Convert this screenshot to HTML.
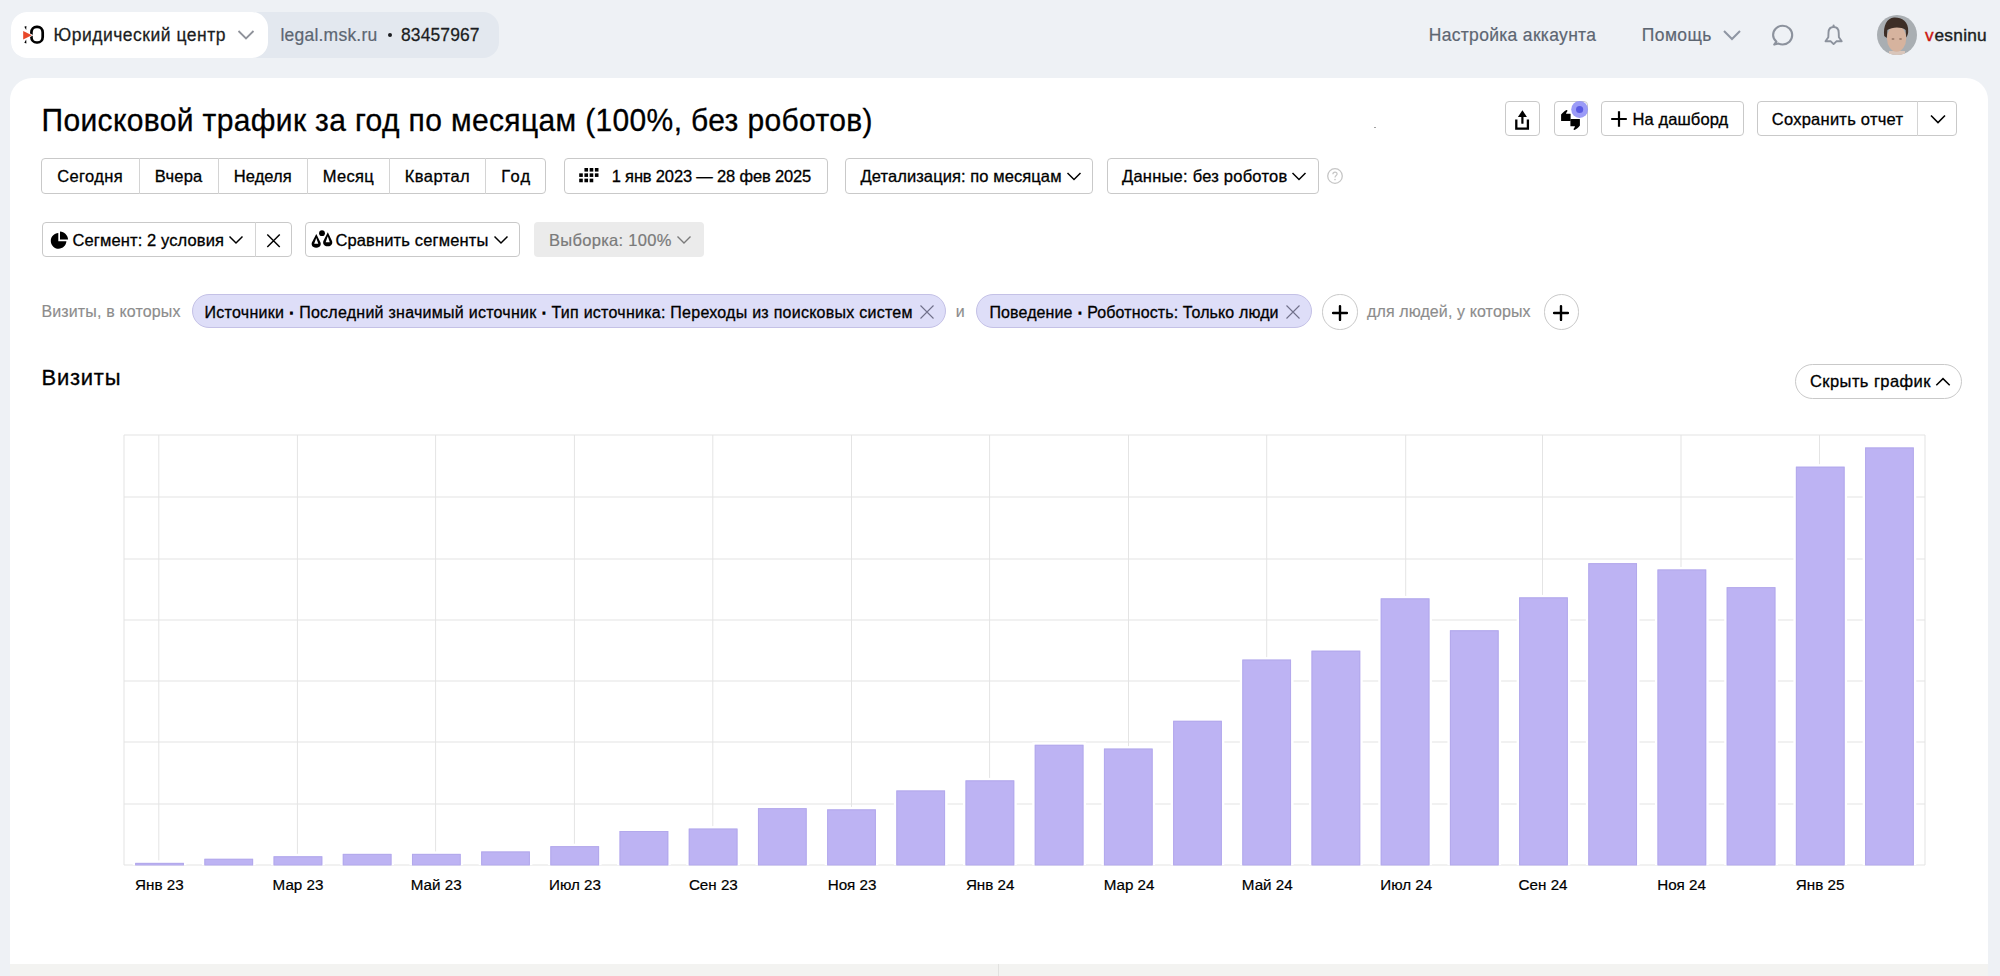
<!DOCTYPE html>
<html><head><meta charset="utf-8"><title>Поисковой трафик</title>
<style>
html,body{margin:0;padding:0;}
body{width:2000px;height:976px;overflow:hidden;background:#eef1f5;position:relative;font-family:"Liberation Sans",sans-serif;}
.t{position:absolute;white-space:nowrap;}
.b{position:absolute;}
.dot{-webkit-text-stroke:1.3px #000;}
</style></head><body>
<div class="b" style="left:11px;top:12px;width:488px;height:46px;background:#e3e8ef;border-radius:16px;"></div>
<div class="b" style="left:11px;top:12px;width:257px;height:46px;background:#fff;border-radius:16px;"></div>
<svg class="b" style="left:18px;top:20px" width="32" height="28" viewBox="0 0 32 28">
<rect x="13.4" y="6.8" width="11.3" height="15.7" rx="5.2" ry="5.6" fill="none" stroke="#000" stroke-width="2.7"/>
<path d="M5.2 10.9 L13.8 15.2 L5.2 19.5 Z" fill="#e8482a" stroke="#fff" stroke-width="1.6" paint-order="stroke"/>
<path d="M6.3 6.8 L8.4 5.9 L8.2 10 Z M6.3 22.7 L8.4 23.6 L8.2 19.6 Z" fill="#000"/>
</svg>
<div class="t" style="left:53.50px;top:26.59px;font-size:17.5px;line-height:17.5px;color:#1b1d21;letter-spacing:0.512px;-webkit-text-stroke:0.25px #1b1d21;transform:scaleY(1.07);transform-origin:0 14.81px;">Юридический центр</div>
<svg class="b" style="left:237px;top:29.3px" width="18" height="12" viewBox="0 0 18 12"><path d="M1.5 2 L9 9.5 L16.5 2" fill="none" stroke="#8f929a" stroke-width="1.8"/></svg>
<div class="t" style="left:280.50px;top:26.59px;font-size:17.5px;line-height:17.5px;color:#5d6672;letter-spacing:0.214px;-webkit-text-stroke:0.2px #5d6672;transform:scaleY(1.07);transform-origin:0 14.81px;">legal.msk.ru</div>
<div class="b" style="left:387.5px;top:32.5px;width:4px;height:4px;background:#1b1d21;border-radius:50%;"></div>
<div class="t" style="left:401.00px;top:26.59px;font-size:17.5px;line-height:17.5px;color:#1b1d21;letter-spacing:0.093px;-webkit-text-stroke:0.25px #1b1d21;transform:scaleY(1.05);transform-origin:0 14.81px;">83457967</div>
<div class="t" style="left:1428.70px;top:26.69px;font-size:17.5px;line-height:17.5px;color:#5d6672;letter-spacing:0.315px;-webkit-text-stroke:0.2px #5d6672;transform:scaleY(1.07);transform-origin:0 14.81px;">Настройка аккаунта</div>
<div class="t" style="left:1641.70px;top:26.69px;font-size:17.5px;line-height:17.5px;color:#5d6672;letter-spacing:0.440px;-webkit-text-stroke:0.2px #5d6672;transform:scaleY(1.07);transform-origin:0 14.81px;">Помощь</div>
<svg class="b" style="left:1722px;top:28px" width="20" height="14" viewBox="0 0 20 14"><path d="M2 3 L10 11 L18 3" fill="none" stroke="#8f96a3" stroke-width="2"/></svg>
<svg class="b" style="left:1770px;top:22.8px" width="26" height="26" viewBox="0 0 26 26"><path d="M6.4 18.6 C 4.3 17 3.1 14.7 3.1 12.1 C 3.1 6.8 7.3 2.7 12.7 2.7 C 18 2.7 22.2 6.8 22.2 12.1 C 22.2 17.4 18 21.5 12.7 21.5 C 11.2 21.5 9.8 21.2 8.6 20.6 L 4.2 21.6 Z" fill="none" stroke="#8c929d" stroke-width="2.1" stroke-linejoin="round"/></svg>
<svg class="b" style="left:1821px;top:22px" width="24" height="26" viewBox="0 0 24 26"><path d="M12.6 5 C 9.3 5 7.6 7.6 7.5 10.5 L 7.3 15.3 L 4.5 19.3 L 9.8 19.3 L 12.6 22.1 L 15.4 19.3 L 20.7 19.3 L 17.9 15.3 L 17.7 10.5 C 17.6 7.6 15.9 5 12.6 5 Z" fill="none" stroke="#8c929d" stroke-width="1.9" stroke-linejoin="round"/><path d="M12.6 3.6 L12.6 5" stroke="#8c929d" stroke-width="2" stroke-linecap="round"/></svg>
<svg class="b" style="left:1877px;top:14.7px" width="40" height="40" viewBox="0 0 40 40">
<defs><clipPath id="av"><circle cx="20" cy="20" r="20"/></clipPath></defs>
<g clip-path="url(#av)"><rect width="40" height="40" fill="#a9aeb2"/>
<path d="M12 36 L12 44 L28 44 L28 36 Z" fill="#d9c6bb"/>
<ellipse cx="19.6" cy="23.5" rx="9.6" ry="13.2" fill="#d6b39e"/>
<path d="M7.2 21 C 6 11, 10 3, 17 2.6 C 24 2.2, 32 6, 31.2 17 C 31 19.5, 30 21.5, 29.2 22.5 L 28.6 15 C 24 11.5, 15 12, 10.4 15 L 9.8 23 Z" fill="#3d2e26"/>
<ellipse cx="16" cy="24" rx="1.5" ry="0.8" fill="#8a6a5a"/><ellipse cx="23.5" cy="24" rx="1.5" ry="0.8" fill="#8a6a5a"/>
</g></svg>
<div class="t" style="left:1925.00px;top:26.56px;font-size:17.3px;line-height:17.3px;color:#cc1510;-webkit-text-stroke:0.4px #cc1510;">v</div>
<div class="t" style="left:1934.50px;top:26.56px;font-size:17.3px;line-height:17.3px;color:#1b1d21;letter-spacing:0.260px;-webkit-text-stroke:0.4px #1b1d21;">esninu</div>
<div class="b" style="left:10px;top:78px;width:1978px;height:900px;background:#fff;border-radius:22px 22px 0 0;"></div>
<div class="b" style="left:10px;top:964px;width:1978px;height:12px;background:#f3f3f1;"></div>
<div class="b" style="left:998px;top:964px;width:1px;height:12px;background:#e2e2e0;"></div>
<div class="t" style="left:41.50px;top:105.80px;font-size:30px;line-height:30px;color:#000;letter-spacing:0.358px;-webkit-text-stroke:0.3px #000;transform:scaleY(1.06);transform-origin:0 25.39px;">Поисковой трафик за год по месяцам (100%, без роботов)</div>
<div class="b" style="left:1374.3px;top:126.8px;width:2px;height:1.2px;background:#8a8a8a;opacity:0.8;"></div>
<div class="b" style="left:1505px;top:101px;width:35px;height:35px;border:1px solid #c9c9c9;border-radius:4px;background:#fff;box-sizing:border-box;"></div>
<svg class="b" style="left:1505px;top:100px" width="35" height="35" viewBox="0 0 35 35"><path d="M17.4 10.2 L12.9 16.9 L21.9 16.9 Z" fill="#000"/><rect x="16.3" y="16" width="2.2" height="7.8" rx="0.6" fill="#000"/><path d="M11.3 19.4 L11.3 28.6 L22.9 28.6 L22.9 19.4" fill="none" stroke="#000" stroke-width="2.3"/></svg>
<div class="b" style="left:1553.5px;top:101px;width:34.5px;height:35px;border:1px solid #c9c9c9;border-radius:4px;background:#fff;box-sizing:border-box;"></div>
<svg class="b" style="left:1555px;top:100px" width="35" height="35" viewBox="0 0 35 35"><path d="M6.3 21.1 Q6.1 21.1 6.1 20.8 L6.1 14.6 C 7.6 12.6 9.6 11 11.6 10 Q12 9.8 12.2 10.2 L12.5 11 C 11.8 11.8 11.2 12.8 11 13.8 L15.3 13.8 Q15.6 13.8 15.6 14.1 L15.6 20.8 Q15.6 21.1 15.3 21.1 Z" fill="#000"/><path d="M24.6 19 Q24.9 19 24.9 19.3 L24.9 25.5 C 23.4 27.5 21.4 29.1 19.4 30 Q19 30.2 18.8 29.8 L18.5 29 C 19.2 28.2 19.8 27.2 20 26.2 L15.7 26.2 Q15.4 26.2 15.4 25.9 L15.4 19.3 Q15.4 19 15.7 19 Z" fill="#000"/></svg>
<svg class="b" style="left:1570px;top:100px" width="20" height="20" viewBox="0 0 20 20"><circle cx="9.6" cy="9.5" r="8.4" fill="#9090f6" fill-opacity="0.9"/><circle cx="9.6" cy="9.5" r="3.6" fill="#5a5ae3"/></svg>
<div class="b" style="left:1601px;top:101px;width:143px;height:35px;border:1px solid #c9c9c9;border-radius:4px;background:#fff;box-sizing:border-box;"></div>
<svg class="b" style="left:1609px;top:109px" width="20" height="20" viewBox="0 0 20 20"><path d="M10 2.2 L10 17.8 M2.2 10 L17.8 10" stroke="#000" stroke-width="2.2"/></svg>
<div class="t" style="left:1632.50px;top:110.53px;font-size:16.5px;line-height:16.5px;color:#000;letter-spacing:0.106px;-webkit-text-stroke:0.3px #000;">На дашборд</div>
<div class="b" style="left:1757px;top:101px;width:200px;height:35px;border:1px solid #c9c9c9;border-radius:4px;background:#fff;box-sizing:border-box;"></div>
<div class="b" style="left:1917px;top:101px;width:1px;height:35px;background:#d4d4d4;"></div>
<div class="t" style="left:1771.80px;top:110.53px;font-size:16.5px;line-height:16.5px;color:#000;letter-spacing:0.246px;-webkit-text-stroke:0.3px #000;">Сохранить отчет</div>
<svg class="b" style="left:1929px;top:113px" width="18" height="12" viewBox="0 0 18 12"><path d="M2 2.5 L9 9.5 L16 2.5" fill="none" stroke="#000" stroke-width="1.6"/></svg>
<div class="b" style="left:41px;top:158px;width:505px;height:36px;border:1px solid #c9c9c9;border-radius:4px;background:#fff;box-sizing:border-box;"></div>
<div class="b" style="left:139px;top:158px;width:1px;height:36px;background:#d4d4d4;"></div>
<div class="b" style="left:217.5px;top:158px;width:1px;height:36px;background:#d4d4d4;"></div>
<div class="b" style="left:307px;top:158px;width:1px;height:36px;background:#d4d4d4;"></div>
<div class="b" style="left:389px;top:158px;width:1px;height:36px;background:#d4d4d4;"></div>
<div class="b" style="left:485px;top:158px;width:1px;height:36px;background:#d4d4d4;"></div>
<div class="t" style="left:57.20px;top:167.53px;font-size:16.5px;line-height:16.5px;color:#000;letter-spacing:0.375px;-webkit-text-stroke:0.3px #000;">Сегодня</div>
<div class="t" style="left:154.70px;top:167.53px;font-size:16.5px;line-height:16.5px;color:#000;letter-spacing:0.250px;-webkit-text-stroke:0.3px #000;">Вчера</div>
<div class="t" style="left:233.80px;top:167.53px;font-size:16.5px;line-height:16.5px;color:#000;letter-spacing:0.070px;-webkit-text-stroke:0.3px #000;">Неделя</div>
<div class="t" style="left:322.70px;top:167.53px;font-size:16.5px;line-height:16.5px;color:#000;letter-spacing:0.312px;-webkit-text-stroke:0.3px #000;">Месяц</div>
<div class="t" style="left:404.80px;top:167.53px;font-size:16.5px;line-height:16.5px;color:#000;letter-spacing:0.425px;-webkit-text-stroke:0.3px #000;">Квартал</div>
<div class="t" style="left:501.20px;top:167.53px;font-size:16.5px;line-height:16.5px;color:#000;letter-spacing:1.375px;-webkit-text-stroke:0.3px #000;">Год</div>
<div class="b" style="left:563.5px;top:158px;width:264px;height:36px;border:1px solid #c9c9c9;border-radius:4px;background:#fff;box-sizing:border-box;"></div>
<svg class="b" style="left:579px;top:168px" width="20" height="16" viewBox="0 0 20 16"><rect x="5.43" y="0.00" width="3.6" height="3.6" fill="#000"/><rect x="10.66" y="0.00" width="3.6" height="3.6" fill="#000"/><rect x="15.89" y="0.00" width="3.6" height="3.6" fill="#000"/><rect x="0.20" y="5.33" width="3.6" height="3.6" fill="#000"/><rect x="5.43" y="5.33" width="3.6" height="3.6" fill="#000"/><rect x="10.66" y="5.33" width="3.6" height="3.6" fill="#000"/><rect x="15.89" y="5.33" width="3.6" height="3.6" fill="#000"/><rect x="0.20" y="10.66" width="3.6" height="3.6" fill="#000"/><rect x="5.43" y="10.66" width="3.6" height="3.6" fill="#000"/><rect x="10.66" y="10.66" width="3.6" height="3.6" fill="#000"/></svg>
<div class="t" style="left:611.70px;top:167.53px;font-size:16.5px;line-height:16.5px;color:#000;letter-spacing:-0.165px;-webkit-text-stroke:0.3px #000;">1 янв 2023 — 28 фев 2025</div>
<div class="b" style="left:845px;top:158px;width:248px;height:36px;border:1px solid #c9c9c9;border-radius:4px;background:#fff;box-sizing:border-box;"></div>
<div class="t" style="left:860.50px;top:167.53px;font-size:16.5px;line-height:16.5px;color:#000;letter-spacing:0.086px;-webkit-text-stroke:0.3px #000;">Детализация: по месяцам</div>
<svg class="b" style="left:1065px;top:169px" width="18" height="14" viewBox="0 0 18 14"><path d="M2.5 4 L9 10.5 L15.5 4" fill="none" stroke="#000" stroke-width="1.5"/></svg>
<div class="b" style="left:1106.5px;top:158px;width:212px;height:36px;border:1px solid #c9c9c9;border-radius:4px;background:#fff;box-sizing:border-box;"></div>
<div class="t" style="left:1122.00px;top:167.53px;font-size:16.5px;line-height:16.5px;color:#000;letter-spacing:0.236px;-webkit-text-stroke:0.3px #000;">Данные: без роботов</div>
<svg class="b" style="left:1290px;top:169px" width="18" height="14" viewBox="0 0 18 14"><path d="M2.5 4 L9 10.5 L15.5 4" fill="none" stroke="#000" stroke-width="1.5"/></svg>
<svg class="b" style="left:1326px;top:167px" width="18" height="18" viewBox="0 0 18 18"><circle cx="9" cy="9" r="7.3" fill="none" stroke="#c6c6c6" stroke-width="1.3"/><path d="M6.9 7.2 C 6.9 5.9 7.8 5.1 9 5.1 C 10.2 5.1 11.1 5.9 11.1 7 C 11.1 8.4 9 8.6 9 10.4" fill="none" stroke="#c6c6c6" stroke-width="1.2"/><circle cx="9" cy="12.6" r="0.8" fill="#c6c6c6"/></svg>
<div class="b" style="left:41.5px;top:222px;width:250px;height:35px;border:1px solid #c9c9c9;border-radius:4px;background:#fff;box-sizing:border-box;"></div>
<div class="b" style="left:255px;top:222px;width:1px;height:35px;background:#d4d4d4;"></div>
<svg class="b" style="left:49px;top:230px" width="20" height="20" viewBox="0 0 20 20"><path d="M9.3 3.1 C 5.2 3.4 1.8 6.7 1.8 10.9 C 1.8 15.2 5.3 18.7 9.6 18.7 C 13.8 18.7 17.1 15.4 17.4 11.3 L 9.3 11.3 Z" fill="#000"/><path d="M11 1.5 L11 9.6 L19.1 9.6 C 18.8 5.3 15.3 1.8 11 1.5 Z" fill="#000"/></svg>
<div class="t" style="left:72.50px;top:231.53px;font-size:16.5px;line-height:16.5px;color:#000;letter-spacing:0.121px;-webkit-text-stroke:0.3px #000;">Сегмент: 2 условия</div>
<svg class="b" style="left:227px;top:232.7px" width="18" height="14" viewBox="0 0 18 14"><path d="M2.5 3.5 L9 10 L15.5 3.5" fill="none" stroke="#000" stroke-width="1.45"/></svg>
<svg class="b" style="left:265px;top:231px" width="18" height="18" viewBox="0 0 18 18"><path d="M2.3 3.5 L14.75 15.9 M14.75 3.5 L2.3 15.9" stroke="#000" stroke-width="1.45"/></svg>
<div class="b" style="left:304.5px;top:222px;width:215.5px;height:35px;border:1px solid #c9c9c9;border-radius:4px;background:#fff;box-sizing:border-box;"></div>
<svg class="b" style="left:308px;top:226px" width="28" height="28" viewBox="0 0 28 28"><circle cx="14" cy="7.2" r="2.9" fill="#000"/><path d="M8.3 8 L3.9 16.6 C3.2 18.2 3.6 21.8 8.2 21.8 C12.8 21.8 13.2 18.2 12.5 16.6 Z" fill="#000"/><path d="M8.25 12 L6.2 17.8 L10.3 17.8 Z" fill="#fff"/><path d="M19.8 6.3 L15.4 14.9 C14.7 16.5 15.1 20.3 19.7 20.3 C24.3 20.3 24.7 16.5 24 14.9 Z" fill="#000"/><path d="M19.75 10.2 L17.7 16.3 L21.8 16.3 Z" fill="#fff"/></svg>
<div class="t" style="left:335.40px;top:231.53px;font-size:16.5px;line-height:16.5px;color:#000;letter-spacing:0.144px;-webkit-text-stroke:0.3px #000;">Сравнить сегменты</div>
<svg class="b" style="left:492px;top:232.7px" width="18" height="14" viewBox="0 0 18 14"><path d="M2.5 3.5 L9 10 L15.5 3.5" fill="none" stroke="#000" stroke-width="1.45"/></svg>
<div class="b" style="left:534px;top:222px;width:170px;height:35px;background:#ebebeb;border-radius:4px;"></div>
<div class="t" style="left:549.00px;top:231.53px;font-size:16.5px;line-height:16.5px;color:#7a7a7a;letter-spacing:0.308px;-webkit-text-stroke:0.2px #7a7a7a;">Выборка: 100%</div>
<svg class="b" style="left:675px;top:232.7px" width="18" height="14" viewBox="0 0 18 14"><path d="M2.5 3.5 L9 10 L15.5 3.5" fill="none" stroke="#7a7a7a" stroke-width="1.35"/></svg>
<div class="t" style="left:41.40px;top:303.56px;font-size:16px;line-height:16px;color:#8c8c8c;letter-spacing:0.150px;-webkit-text-stroke:0.15px #8c8c8c;transform:scaleY(1.07);transform-origin:0 13.54px;">Визиты, в которых</div>
<div class="b" style="left:191.5px;top:294px;width:754px;height:34px;background:#dedef8;border:1px solid #c4c1e6;border-radius:17px;box-sizing:border-box;"></div>
<div class="t" style="left:204.60px;top:304.96px;font-size:16px;line-height:16px;color:#000;letter-spacing:0.257px;-webkit-text-stroke:0.3px #000;transform:scaleY(1.08);transform-origin:0 13.54px;">Источники <span class="dot">·</span> Последний значимый источник <span class="dot">·</span> Тип источника: Переходы из поисковых систем</div>
<svg class="b" style="left:918px;top:303px" width="18" height="18" viewBox="0 0 18 18"><path d="M2.5 2.5 L15.5 15.5 M15.5 2.5 L2.5 15.5" stroke="#70708a" stroke-width="1.1"/></svg>
<div class="t" style="left:955.70px;top:303.66px;font-size:16px;line-height:16px;color:#8c8c8c;-webkit-text-stroke:0.15px #8c8c8c;transform:scaleY(1.07);transform-origin:0 13.54px;">и</div>
<div class="b" style="left:976px;top:294px;width:336px;height:34px;background:#dedef8;border:1px solid #c4c1e6;border-radius:17px;box-sizing:border-box;"></div>
<div class="t" style="left:989.40px;top:304.96px;font-size:16px;line-height:16px;color:#000;letter-spacing:0.118px;-webkit-text-stroke:0.3px #000;transform:scaleY(1.08);transform-origin:0 13.54px;">Поведение <span class="dot">·</span> Роботность: Только люди</div>
<svg class="b" style="left:1284px;top:303px" width="18" height="18" viewBox="0 0 18 18"><path d="M2.5 2.5 L15.5 15.5 M15.5 2.5 L2.5 15.5" stroke="#70708a" stroke-width="1.1"/></svg>
<div class="b" style="left:1322.3px;top:294.3px;width:35.4px;height:35.4px;border:1px solid #c9c9c9;border-radius:50%;box-sizing:border-box;"></div>
<svg class="b" style="left:1330px;top:302.6px" width="20" height="20" viewBox="0 0 20 20"><path d="M10 3.1 L10 16.9 M3.1 10 L16.9 10" stroke="#000" stroke-width="2.4" stroke-linecap="round"/></svg>
<div class="t" style="left:1367.00px;top:303.96px;font-size:16px;line-height:16px;color:#8c8c8c;letter-spacing:0.108px;-webkit-text-stroke:0.15px #8c8c8c;transform:scaleY(1.07);transform-origin:0 13.54px;">для людей, у которых</div>
<div class="b" style="left:1543.6px;top:294.3px;width:35.4px;height:35.4px;border:1px solid #c9c9c9;border-radius:50%;box-sizing:border-box;"></div>
<svg class="b" style="left:1551.3px;top:302.6px" width="20" height="20" viewBox="0 0 20 20"><path d="M10 3.1 L10 16.9 M3.1 10 L16.9 10" stroke="#000" stroke-width="2.4" stroke-linecap="round"/></svg>
<div class="t" style="left:41.50px;top:367.38px;font-size:22px;line-height:22px;color:#000;letter-spacing:0.750px;-webkit-text-stroke:0.3px #000;transform:scaleY(1.02);transform-origin:0 18.62px;">Визиты</div>
<div class="b" style="left:1794.5px;top:364.3px;width:167.5px;height:34.7px;border:1px solid #c9c9c9;border-radius:18px;box-sizing:border-box;"></div>
<div class="t" style="left:1810.00px;top:373.43px;font-size:16.5px;line-height:16.5px;color:#000;letter-spacing:0.429px;-webkit-text-stroke:0.3px #000;">Скрыть график</div>
<svg class="b" style="left:1934px;top:375px" width="18" height="14" viewBox="0 0 18 14"><path d="M2.3 10.3 L9 3.6 L15.7 10.3" fill="none" stroke="#000" stroke-width="1.5"/></svg>
<svg class="b" style="left:0;top:0" width="2000" height="976" viewBox="0 0 2000 976"><rect x="124" y="434.5" width="1801" height="1" fill="#e4e4e4"/><rect x="124" y="496.5" width="1801" height="1" fill="#e4e4e4"/><rect x="124" y="558.5" width="1801" height="1" fill="#e4e4e4"/><rect x="124" y="619.5" width="1801" height="1" fill="#e4e4e4"/><rect x="124" y="680.5" width="1801" height="1" fill="#e4e4e4"/><rect x="124" y="741.5" width="1801" height="1" fill="#e4e4e4"/><rect x="124" y="803.5" width="1801" height="1" fill="#e4e4e4"/><rect x="124" y="864.5" width="1801" height="1" fill="#e4e4e4"/><rect x="123.5" y="435" width="1" height="430" fill="#e4e4e4"/><rect x="1924.5" y="435" width="1" height="430" fill="#e4e4e4"/><rect x="158.30" y="435" width="1" height="430" fill="#e4e4e4"/><rect x="296.90" y="435" width="1" height="430" fill="#e4e4e4"/><rect x="435.10" y="435" width="1" height="430" fill="#e4e4e4"/><rect x="573.90" y="435" width="1" height="430" fill="#e4e4e4"/><rect x="712.30" y="435" width="1" height="430" fill="#e4e4e4"/><rect x="851.00" y="435" width="1" height="430" fill="#e4e4e4"/><rect x="989.10" y="435" width="1" height="430" fill="#e4e4e4"/><rect x="1128.00" y="435" width="1" height="430" fill="#e4e4e4"/><rect x="1266.20" y="435" width="1" height="430" fill="#e4e4e4"/><rect x="1405.20" y="435" width="1" height="430" fill="#e4e4e4"/><rect x="1542.00" y="435" width="1" height="430" fill="#e4e4e4"/><rect x="1680.50" y="435" width="1" height="430" fill="#e4e4e4"/><rect x="1819.00" y="435" width="1" height="430" fill="#e4e4e4"/><rect x="132.70" y="860.40" width="53.7" height="4.60" fill="#fff"/><rect x="135.20" y="862.90" width="48.7" height="2.10" fill="#bdb3f3"/><rect x="135.70" y="863.40" width="47.7" height="1.60" fill="none" stroke="#b3a9ec" stroke-width="1"/><rect x="201.90" y="856.30" width="53.7" height="8.70" fill="#fff"/><rect x="204.40" y="858.80" width="48.7" height="6.20" fill="#bdb3f3"/><rect x="204.90" y="859.30" width="47.7" height="5.70" fill="none" stroke="#b3a9ec" stroke-width="1"/><rect x="271.09" y="853.80" width="53.7" height="11.20" fill="#fff"/><rect x="273.59" y="856.30" width="48.7" height="8.70" fill="#bdb3f3"/><rect x="274.09" y="856.80" width="47.7" height="8.20" fill="none" stroke="#b3a9ec" stroke-width="1"/><rect x="340.29" y="851.40" width="53.7" height="13.60" fill="#fff"/><rect x="342.79" y="853.90" width="48.7" height="11.10" fill="#bdb3f3"/><rect x="343.29" y="854.40" width="47.7" height="10.60" fill="none" stroke="#b3a9ec" stroke-width="1"/><rect x="409.48" y="851.40" width="53.7" height="13.60" fill="#fff"/><rect x="411.98" y="853.90" width="48.7" height="11.10" fill="#bdb3f3"/><rect x="412.48" y="854.40" width="47.7" height="10.60" fill="none" stroke="#b3a9ec" stroke-width="1"/><rect x="478.68" y="849.00" width="53.7" height="16.00" fill="#fff"/><rect x="481.18" y="851.50" width="48.7" height="13.50" fill="#bdb3f3"/><rect x="481.68" y="852.00" width="47.7" height="13.00" fill="none" stroke="#b3a9ec" stroke-width="1"/><rect x="547.88" y="843.70" width="53.7" height="21.30" fill="#fff"/><rect x="550.38" y="846.20" width="48.7" height="18.80" fill="#bdb3f3"/><rect x="550.88" y="846.70" width="47.7" height="18.30" fill="none" stroke="#b3a9ec" stroke-width="1"/><rect x="617.07" y="828.50" width="53.7" height="36.50" fill="#fff"/><rect x="619.57" y="831.00" width="48.7" height="34.00" fill="#bdb3f3"/><rect x="620.07" y="831.50" width="47.7" height="33.50" fill="none" stroke="#b3a9ec" stroke-width="1"/><rect x="686.27" y="826.10" width="53.7" height="38.90" fill="#fff"/><rect x="688.77" y="828.60" width="48.7" height="36.40" fill="#bdb3f3"/><rect x="689.27" y="829.10" width="47.7" height="35.90" fill="none" stroke="#b3a9ec" stroke-width="1"/><rect x="755.46" y="805.70" width="53.7" height="59.30" fill="#fff"/><rect x="757.96" y="808.20" width="48.7" height="56.80" fill="#bdb3f3"/><rect x="758.46" y="808.70" width="47.7" height="56.30" fill="none" stroke="#b3a9ec" stroke-width="1"/><rect x="824.66" y="806.90" width="53.7" height="58.10" fill="#fff"/><rect x="827.16" y="809.40" width="48.7" height="55.60" fill="#bdb3f3"/><rect x="827.66" y="809.90" width="47.7" height="55.10" fill="none" stroke="#b3a9ec" stroke-width="1"/><rect x="893.86" y="788.00" width="53.7" height="77.00" fill="#fff"/><rect x="896.36" y="790.50" width="48.7" height="74.50" fill="#bdb3f3"/><rect x="896.86" y="791.00" width="47.7" height="74.00" fill="none" stroke="#b3a9ec" stroke-width="1"/><rect x="963.05" y="777.90" width="53.7" height="87.10" fill="#fff"/><rect x="965.55" y="780.40" width="48.7" height="84.60" fill="#bdb3f3"/><rect x="966.05" y="780.90" width="47.7" height="84.10" fill="none" stroke="#b3a9ec" stroke-width="1"/><rect x="1032.25" y="742.30" width="53.7" height="122.70" fill="#fff"/><rect x="1034.75" y="744.80" width="48.7" height="120.20" fill="#bdb3f3"/><rect x="1035.25" y="745.30" width="47.7" height="119.70" fill="none" stroke="#b3a9ec" stroke-width="1"/><rect x="1101.44" y="746.10" width="53.7" height="118.90" fill="#fff"/><rect x="1103.94" y="748.60" width="48.7" height="116.40" fill="#bdb3f3"/><rect x="1104.44" y="749.10" width="47.7" height="115.90" fill="none" stroke="#b3a9ec" stroke-width="1"/><rect x="1170.64" y="718.30" width="53.7" height="146.70" fill="#fff"/><rect x="1173.14" y="720.80" width="48.7" height="144.20" fill="#bdb3f3"/><rect x="1173.64" y="721.30" width="47.7" height="143.70" fill="none" stroke="#b3a9ec" stroke-width="1"/><rect x="1239.84" y="657.10" width="53.7" height="207.90" fill="#fff"/><rect x="1242.34" y="659.60" width="48.7" height="205.40" fill="#bdb3f3"/><rect x="1242.84" y="660.10" width="47.7" height="204.90" fill="none" stroke="#b3a9ec" stroke-width="1"/><rect x="1309.03" y="648.20" width="53.7" height="216.80" fill="#fff"/><rect x="1311.53" y="650.70" width="48.7" height="214.30" fill="#bdb3f3"/><rect x="1312.03" y="651.20" width="47.7" height="213.80" fill="none" stroke="#b3a9ec" stroke-width="1"/><rect x="1378.23" y="595.90" width="53.7" height="269.10" fill="#fff"/><rect x="1380.73" y="598.40" width="48.7" height="266.60" fill="#bdb3f3"/><rect x="1381.23" y="598.90" width="47.7" height="266.10" fill="none" stroke="#b3a9ec" stroke-width="1"/><rect x="1447.42" y="627.80" width="53.7" height="237.20" fill="#fff"/><rect x="1449.92" y="630.30" width="48.7" height="234.70" fill="#bdb3f3"/><rect x="1450.42" y="630.80" width="47.7" height="234.20" fill="none" stroke="#b3a9ec" stroke-width="1"/><rect x="1516.62" y="594.90" width="53.7" height="270.10" fill="#fff"/><rect x="1519.12" y="597.40" width="48.7" height="267.60" fill="#bdb3f3"/><rect x="1519.62" y="597.90" width="47.7" height="267.10" fill="none" stroke="#b3a9ec" stroke-width="1"/><rect x="1585.82" y="560.70" width="53.7" height="304.30" fill="#fff"/><rect x="1588.32" y="563.20" width="48.7" height="301.80" fill="#bdb3f3"/><rect x="1588.82" y="563.70" width="47.7" height="301.30" fill="none" stroke="#b3a9ec" stroke-width="1"/><rect x="1655.01" y="567.00" width="53.7" height="298.00" fill="#fff"/><rect x="1657.51" y="569.50" width="48.7" height="295.50" fill="#bdb3f3"/><rect x="1658.01" y="570.00" width="47.7" height="295.00" fill="none" stroke="#b3a9ec" stroke-width="1"/><rect x="1724.21" y="584.70" width="53.7" height="280.30" fill="#fff"/><rect x="1726.71" y="587.20" width="48.7" height="277.80" fill="#bdb3f3"/><rect x="1727.21" y="587.70" width="47.7" height="277.30" fill="none" stroke="#b3a9ec" stroke-width="1"/><rect x="1793.40" y="464.20" width="53.7" height="400.80" fill="#fff"/><rect x="1795.90" y="466.70" width="48.7" height="398.30" fill="#bdb3f3"/><rect x="1796.40" y="467.20" width="47.7" height="397.80" fill="none" stroke="#b3a9ec" stroke-width="1"/><rect x="1862.60" y="445.00" width="53.7" height="420.00" fill="#fff"/><rect x="1865.10" y="447.50" width="48.7" height="417.50" fill="#bdb3f3"/><rect x="1865.60" y="448.00" width="47.7" height="417.00" fill="none" stroke="#b3a9ec" stroke-width="1"/></svg>
<div class="t" style="left:135.10px;top:877.13px;font-size:15.2px;line-height:15.2px;color:#000;-webkit-text-stroke:0.2px #000;">Янв 23</div>
<div class="t" style="left:272.57px;top:877.13px;font-size:15.2px;line-height:15.2px;color:#000;-webkit-text-stroke:0.2px #000;">Мар 23</div>
<div class="t" style="left:410.75px;top:877.13px;font-size:15.2px;line-height:15.2px;color:#000;-webkit-text-stroke:0.2px #000;">Май 23</div>
<div class="t" style="left:549.00px;top:877.13px;font-size:15.2px;line-height:15.2px;color:#000;-webkit-text-stroke:0.2px #000;">Июл 23</div>
<div class="t" style="left:688.92px;top:877.13px;font-size:15.2px;line-height:15.2px;color:#000;-webkit-text-stroke:0.2px #000;">Сен 23</div>
<div class="t" style="left:827.70px;top:877.13px;font-size:15.2px;line-height:15.2px;color:#000;-webkit-text-stroke:0.2px #000;">Ноя 23</div>
<div class="t" style="left:965.90px;top:877.13px;font-size:15.2px;line-height:15.2px;color:#000;-webkit-text-stroke:0.2px #000;">Янв 24</div>
<div class="t" style="left:1103.67px;top:877.13px;font-size:15.2px;line-height:15.2px;color:#000;-webkit-text-stroke:0.2px #000;">Мар 24</div>
<div class="t" style="left:1241.85px;top:877.13px;font-size:15.2px;line-height:15.2px;color:#000;-webkit-text-stroke:0.2px #000;">Май 24</div>
<div class="t" style="left:1380.30px;top:877.13px;font-size:15.2px;line-height:15.2px;color:#000;-webkit-text-stroke:0.2px #000;">Июл 24</div>
<div class="t" style="left:1518.62px;top:877.13px;font-size:15.2px;line-height:15.2px;color:#000;-webkit-text-stroke:0.2px #000;">Сен 24</div>
<div class="t" style="left:1657.20px;top:877.13px;font-size:15.2px;line-height:15.2px;color:#000;-webkit-text-stroke:0.2px #000;">Ноя 24</div>
<div class="t" style="left:1795.80px;top:877.13px;font-size:15.2px;line-height:15.2px;color:#000;-webkit-text-stroke:0.2px #000;">Янв 25</div>
</body></html>
